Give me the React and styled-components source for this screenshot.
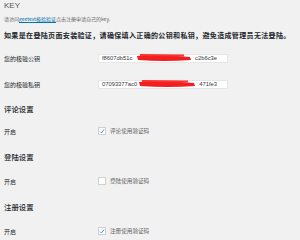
import styled, { createGlobalStyle } from "styled-components";

const GlobalStyle = createGlobalStyle`
  html, body {
    margin: 0;
    padding: 0;
    background: #f1f1f1;
  }
  body {
    font-family: "Noto Sans CJK SC", "Liberation Sans", sans-serif;
    color: #23282d;
  }
`;

const Page = styled.div`
  width: 300px;
  height: 240px;
  overflow: hidden;
  padding: 0 0 0 4px;
  box-sizing: border-box;
`;

const Title = styled.h2`
  margin: 0;
  font-family: "Liberation Sans", sans-serif;
  font-size: 8px;
  font-weight: 400;
  line-height: 11px;
  height: 11px;
  text-align: left;
  color: #555;
`;

const Intro = styled.p`
  margin: 0;
  font-size: 5px;
  line-height: 8px;
  height: 16px;
  display: flex;
  align-items: center;
  color: #666;
  white-space: nowrap;
`;

const Link = styled.a`
  color: #0073aa;
  text-decoration: underline;
`;

const Warning = styled.p`
  margin: 0;
  font-size: 7px;
  font-weight: 700;
  letter-spacing: 0.35px;
  height: 16px;
  line-height: 16px;
  white-space: nowrap;
  color: #23282d;
`;

const Row = styled.div`
  display: grid;
  grid-template-columns: 94px 1fr;
  align-items: center;
  height: ${(p) => p.$h || 20}px;
`;

const Label = styled.span`
  font-size: 6px;
  color: #23282d;
`;

const Heading = styled.h3`
  margin: 0;
  font-size: 7.4px;
  font-weight: 500;
  height: ${(p) => p.$h || 30}px;
  display: flex;
  align-items: center;
  color: #23282d;
`;

const FieldWrap = styled.div`
  position: relative;
  width: 130px;
  height: 9px;
`;

const Input = styled.div`
  box-sizing: border-box;
  width: 100%;
  height: 100%;
  background: #fff;
  border: 1px solid #e6e6e6;
  font-family: "Liberation Sans", sans-serif;
  font-size: 5.8px;
  line-height: 7px;
  padding: 0 10px 0 3px;
  color: #32373c;
  display: flex;
  justify-content: space-between;
`;

const Scribble = styled.svg`
  position: absolute;
  top: -1px;
  left: ${(p) => p.$left}px;
  pointer-events: none;
`;

const CheckLine = styled.label`
  display: flex;
  align-items: center;
  gap: 4px;
  font-size: 5.6px;
  color: #666;
`;

const Box = styled.span`
  width: 8px;
  height: 8px;
  box-sizing: border-box;
  border: 1px solid #d0d0d0;
  background: #fff;
  display: flex;
  align-items: center;
  justify-content: center;
`;

function Check({ checked, children }) {
  return (
    <CheckLine>
      <Box>
        {checked && (
          <svg width="7" height="7" viewBox="0 0 7 7">
            <path d="M1.2 3.6 L2.8 5.2 L6 1.2" fill="none" stroke="#1e8cbe" strokeWidth="1" />
          </svg>
        )}
      </Box>
      {children}
    </CheckLine>
  );
}

function KeyField({ head, tail, left, width }) {
  return (
    <FieldWrap>
      <Input>
        <span>{head}</span>
        <span>{tail}</span>
      </Input>
      <Scribble $left={left} width={width} height="11" viewBox={`0 0 ${width} 11`}>
        <path
          d={`M1 3 Q ${width / 2} 1 ${width - 2} 4 L ${width - 1} 7 Q ${width / 2} 9 2 7 Z`}
          fill="#f02020"
        />
        <path d={`M4 2 L ${width - 8} 2.5`} stroke="#ff3030" strokeWidth="2" />
      </Scribble>
    </FieldWrap>
  );
}

export default function App() {
  return (
    <Page>
      <GlobalStyle />
      <Title>KEY</Title>
      <Intro>
        请访问<Link>geetest极验验证</Link>点击注册申请自己的key.
      </Intro>
      <Warning>如果是在登陆页面安装验证，请确保填入正确的公钥和私钥，避免造成管理员无法登陆。</Warning>
      <Row $h={30}>
        <Label>您的极验公钥</Label>
        <KeyField head="f8607db51c" tail="c2b6c3e" left={38} width={56} />
      </Row>
      <Row $h={22}>
        <Label>您的极验私钥</Label>
        <KeyField head="07093377ac0" tail="471fe3" left={40} width={58} />
      </Row>
      <Heading $h={26}>评论设置</Heading>
      <Row>
        <Label>开启</Label>
        <Check checked>评论使用验证码</Check>
      </Row>
      <Heading>登陆设置</Heading>
      <Row>
        <Label>开启</Label>
        <Check>登陆使用验证码</Check>
      </Row>
      <Heading>注册设置</Heading>
      <Row>
        <Label>开启</Label>
        <Check checked>注册使用验证码</Check>
      </Row>
    </Page>
  );
}
